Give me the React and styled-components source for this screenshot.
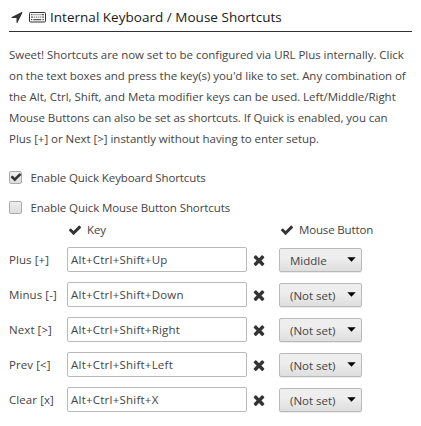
import React from 'react';
import styled, { createGlobalStyle } from 'styled-components';

const GlobalStyle = createGlobalStyle`
  * { box-sizing: border-box; }
  body {
    margin: 0;
    background: #fff;
    color: #444;
    font: 11.5px/21px "Open Sans", "Noto Sans", sans-serif;
  }
`;

const Page = styled.main`
  width: 421px;
  height: 426px;
  padding: 4px 9px 0;
  overflow: hidden;
`;

const Heading = styled.h1`
  display: flex;
  align-items: center;
  width: 403px;
  height: 28px;
  margin: 0;
  padding: 0 0 1px 1px;
  border-bottom: 1px solid #303236;
  color: #181818;
  font-size: 13.5px;
  font-weight: 400;
`;

const HeadingText = styled.span`
  margin-left: 4px;
  white-space: nowrap;
  letter-spacing: ${(p) => p.$track}px;
`;

const Intro = styled.p`
  margin: 12px 0 0;
`;

const Line = styled.span`
  display: block;
  white-space: nowrap;
  letter-spacing: ${(p) => p.$track || 0}px;
`;

const Options = styled.div`
  margin-top: 13px;
`;

const Option = styled.label`
  display: flex;
  align-items: center;
  height: 30px;
`;

const Box = styled.span`
  display: flex;
  align-items: center;
  justify-content: center;
  width: 13px;
  height: 13px;
  margin-right: 8.5px;
  border: 1px solid #aaa;
  border-radius: 2px;
  background: linear-gradient(#eee, #dedede);
`;

const Icon = styled.svg`
  display: block;
  flex: none;
  width: ${(p) => p.$size}px;
  height: ${(p) => p.$size}px;
  fill: #333;
`;

const KeyboardSvg = styled.svg`
  display: block;
  flex: none;
  margin-left: 5px;
`;

const Columns = styled.div`
  display: grid;
  grid-template-columns: 58px 180px 32px 83px;
  align-items: center;
  height: 35px;
`;

const TitleRow = styled(Columns)`
  height: 16px;
  margin-bottom: 4px;
  line-height: 16px;
`;

const ColumnTitle = styled.div`
  display: flex;
  align-items: center;
  gap: 5px;
  grid-column: ${(p) => p.$column};
  padding-left: 1px;
  white-space: nowrap;
`;

const Field = styled.div`
  height: 25px;
  padding: 1px 0 0 3px;
  border: 1px solid #bababa;
  border-radius: 2px;
  background: #fff;
  white-space: nowrap;
`;

const Clear = styled.span`
  display: flex;
  padding: 1px 0 0 4px;
`;

const Select = styled.div`
  display: flex;
  align-items: center;
  justify-content: space-between;
  height: 24px;
  margin-top: 1px;
  padding: 1px 5px 0 10px;
  border: 1px solid #bababa;
  border-radius: 2px;
  background: linear-gradient(#eee 38%, #dedede);
  box-shadow: 0 1px 0 rgba(0, 0, 0, 0.08);
`;

const Text = styled.span`
  white-space: nowrap;
  letter-spacing: ${(p) => p.$track || 0}px;
`;

const Arrow = styled.svg`
  display: block;
  margin-top: -2px;
`;

const CHECK =
  'M1671 566q0 40-28 68l-724 724-136 136q-28 28-68 28t-68-28l-136-136-362-362q-28-28-28-68t28-68l136-136q28-28 68-28t68 28l294 295 656-657q28-28 68-28t68 28l136 136q28 28 28 68z';
const TIMES =
  'M1490 1322q0 40-28 68l-136 136q-28 28-68 28t-68-28l-294-294-294 294q-28 28-68 28t-68-28l-136-136q-28-28-28-68t28-68l294-294-294-294q-28-28-28-68t28-68l136-136q28-28 68-28t68 28l294 294 294-294q28-28 68-28t68 28l136 136q28 28 28 68t-28 68l-294 294 294 294q28 28 28 68z';
const LOCATION =
  'M1593 349l-640 1280q-17 35-57 35-5 0-15-2-22-5-35.5-22.5t-13.5-39.5v-576h-576q-22 0-39.5-13.5t-22.5-35.5 4-42 29-30l1280-640q13-7 29-7 27 0 45 19 15 14 18.5 34.5t-6.5 39.5z';

const Glyph = ({ d, size }) => (
  <Icon $size={size} viewBox="0 0 1792 1792">
    <path d={d} />
  </Icon>
);

const Keyboard = () => (
  <KeyboardSvg width="17" height="11" viewBox="0 0 17 11">
    <rect x="0.5" y="0.5" width="16" height="9.5" rx="0.8" fill="none" stroke="#333" />
    <path
      d="M2 2.7h1.5M4.5 2.7h1M6.5 2.7h1M8.5 2.7h1M10.5 2.7h1M12.5 2.7h2.5M2 5.2h2.2M5.3 5.2h1M7.3 5.2h1M9.3 5.2h1M11.3 5.2h1M13.2 5.2h1.8M2 7.7h1.3M4.3 7.7h8M13.5 7.7h1.5"
      stroke="#555"
      strokeWidth="1.3"
    />
  </KeyboardSvg>
);

const intro = [
  ['Sweet! Shortcuts are now set to be configured via URL Plus internally. Click', -0.04],
  ["on the text boxes and press the key(s) you'd like to set. Any combination of", -0.04],
  ['the Alt, Ctrl, Shift, and Meta modifier keys can be used. Left/Middle/Right', -0.02],
  ['Mouse Buttons can also be set as shortcuts. If Quick is enabled, you can', -0.07],
  ['Plus [+] or Next [>] instantly without having to enter setup.', -0.04],
];

const options = [
  ['Enable Quick Keyboard Shortcuts', true, -0.1],
  ['Enable Quick Mouse Button Shortcuts', false, -0.09],
];

const rows = [
  ['Plus [+]', 'Alt+Ctrl+Shift+Up', 'Middle'],
  ['Minus [-]', 'Alt+Ctrl+Shift+Down', '(Not set)'],
  ['Next [>]', 'Alt+Ctrl+Shift+Right', '(Not set)'],
  ['Prev [<]', 'Alt+Ctrl+Shift+Left', '(Not set)'],
  ['Clear [x]', 'Alt+Ctrl+Shift+X', '(Not set)'],
];

export default function App() {
  return (
    <Page>
      <GlobalStyle />
      <Heading>
        <Glyph d={LOCATION} size={14} />
        <Keyboard />
        <HeadingText $track={0.02}>Internal Keyboard / Mouse Shortcuts</HeadingText>
      </Heading>
      <Intro>
        {intro.map(([text, track]) => (
          <Line key={text} $track={track}>{text}</Line>
        ))}
      </Intro>
      <Options>
        {options.map(([text, checked, track]) => (
          <Option key={text}>
            <Box>{checked && <Glyph d={CHECK} size={12} />}</Box>
            <Text $track={track}>{text}</Text>
          </Option>
        ))}
      </Options>
      <TitleRow>
        <ColumnTitle $column={2}>
          <Glyph d={CHECK} size={14} />
          <Text $track={-0.1}>Key</Text>
        </ColumnTitle>
        <ColumnTitle $column={4}>
          <Glyph d={CHECK} size={14} />
          <Text $track={-0.15}>Mouse Button</Text>
        </ColumnTitle>
      </TitleRow>
      {rows.map(([label, keys, button]) => (
        <Columns key={label}>
          <Text $track={0.08}>{label}</Text>
          <Field>
            <Text $track={0.23}>{keys}</Text>
          </Field>
          <Clear>
            <Glyph d={TIMES} size={16} />
          </Clear>
          <Select>
            <Text>{button}</Text>
            <Arrow width="9" height="5" viewBox="0 0 9 5">
              <path d="M0.3 0.3h8.4L4.5 4.8z" fill="#000" />
            </Arrow>
          </Select>
        </Columns>
      ))}
    </Page>
  );
}
